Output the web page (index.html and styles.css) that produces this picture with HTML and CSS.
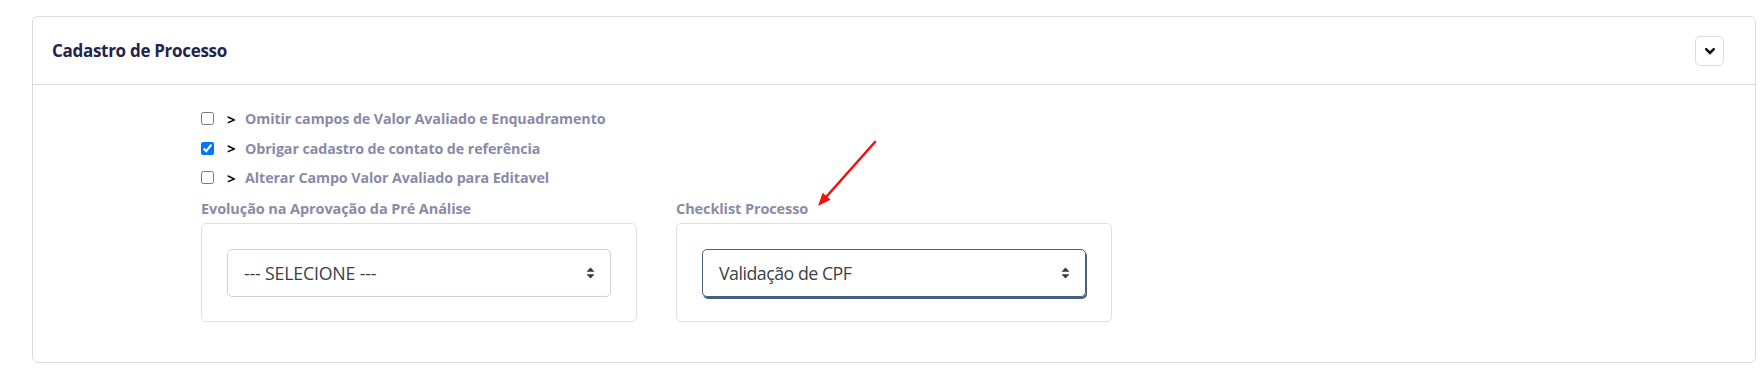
FILE: index.html
```html
<!DOCTYPE html>
<html lang="pt-BR">
<head>
<meta charset="utf-8">
<title>Cadastro de Processo</title>
<link rel="stylesheet" href="styles.css">
</head>
<body>
<div class="page">
  <div class="card">
    <div class="card-header">
      <h3 class="card-title">Cadastro de Processo</h3>
      <button class="toggle" type="button" aria-label="Recolher">
        <svg width="10" height="7" viewBox="0 0 10 7"><polyline points="1.3,1.3 5,5 8.7,1.3" fill="none" stroke="#111" stroke-width="2.6" stroke-linecap="square"/></svg>
      </button>
    </div>
    <div class="card-body">
      <div class="checks">
        <label class="check-row"><input type="checkbox" class="cb"><span class="gt">&gt;</span><span class="check-text">Omitir campos de Valor Avaliado e Enquadramento</span></label>
        <label class="check-row"><input type="checkbox" class="cb" checked><span class="gt">&gt;</span><span class="check-text">Obrigar cadastro de contato de referência</span></label>
        <label class="check-row"><input type="checkbox" class="cb"><span class="gt">&gt;</span><span class="check-text">Alterar Campo Valor Avaliado para Editavel</span></label>
      </div>
      <div class="fields">
        <div class="field">
          <div class="field-label">Evolução na Aprovação da Pré Análise</div>
          <div class="field-box">
            <div class="select">
              <span class="select-text">--- SELECIONE ---</span>
              <svg class="caret" width="9" height="12" viewBox="0 0 9 12"><polygon points="4.5,0.5 8.5,4.8 0.5,4.8" fill="#343a40"/><polygon points="0.5,7.2 8.5,7.2 4.5,11.5" fill="#343a40"/></svg>
            </div>
          </div>
        </div>
        <div class="field">
          <div class="field-label">Checklist Processo</div>
          <div class="field-box">
            <div class="select select-focus">
              <span class="select-text select-text-narrow">Validação de CPF</span>
              <svg class="caret" width="9" height="12" viewBox="0 0 9 12"><polygon points="4.5,0.5 8.5,4.8 0.5,4.8" fill="#343a40"/><polygon points="0.5,7.2 8.5,7.2 4.5,11.5" fill="#343a40"/></svg>
            </div>
          </div>
        </div>
      </div>
    </div>
  </div>
  <svg class="annotation" width="1760" height="373" viewBox="0 0 1760 373">
    <line x1="875" y1="142" x2="827" y2="196" stroke="#f01010" stroke-width="2.6" stroke-linecap="round"/>
    <polygon points="818,206 830.5,199.8 822.7,192.8" fill="#f01010"/>
  </svg>
</div>
</body>
</html>
```
FILE: styles.css
```css
* { box-sizing: border-box; }
html, body { margin: 0; padding: 0; background: #fff; }
body { font-family: "Open Sans", "Noto Sans", sans-serif; }
.page { position: relative; width: 1760px; height: 373px; padding: 16px 0 0 32px; }
.card {
  width: 1724px;
  height: 347px;
  border: 1px solid #dcdcdc;
  border-radius: 6px;
  background: #fff;
}
.card-header {
  height: 68px;
  border-bottom: 1px solid #dcdcdc;
  display: flex;
  align-items: center;
  justify-content: space-between;
  padding: 0 31px 0 19px;
}
.card-title {
  margin: 0;
  font-size: 17px;
  font-weight: 700;
  color: #24244a;
  letter-spacing: -0.3px;
}
.toggle {
  width: 29px;
  height: 30px;
  border: 1px solid #dcdcdc;
  border-radius: 5px;
  background: #fff;
  padding: 0;
  display: flex;
  align-items: center;
  justify-content: center;
  margin-top: 1px;
}
.card-body { padding: 19px 0 0 168px; }
.checks { display: flex; flex-direction: column; }
.check-row { display: flex; align-items: center; height: 29.5px; }
.cb { width: 13px; height: 13px; margin: 0; }
.gt { font-weight: 700; font-size: 15px; color: #000; margin-left: 13px; width: 18px; }
.check-text { font-size: 14.3px; font-weight: 700; color: #8a8aa8; letter-spacing: -0.1px; }
.fields { display: grid; grid-template-columns: 436px 436px; column-gap: 39px; margin-top: 6px; }
.field-label { font-size: 14.5px; font-weight: 700; color: #8a8aa8; line-height: 20px; margin-bottom: 4px; letter-spacing: -0.1px; }
.field-box { border: 1px solid #dee0e3; border-radius: 5px; padding: 25px; height: 99px; }
.select {
  height: 48px;
  border: 1px solid #ced2d8;
  border-radius: 5px;
  display: flex;
  align-items: center;
  justify-content: space-between;
  padding: 0 15px 0 16px;
}
.select-focus { border-color: #44607e; box-shadow: 1px 2px 0 #44607e; }
.select-text { font-size: 17.8px; color: #3b3f44; letter-spacing: -0.2px; }
.select-text-narrow { letter-spacing: -0.5px; }
.caret { display: block; }
.annotation { position: absolute; left: 0; top: 0; pointer-events: none; }
```
